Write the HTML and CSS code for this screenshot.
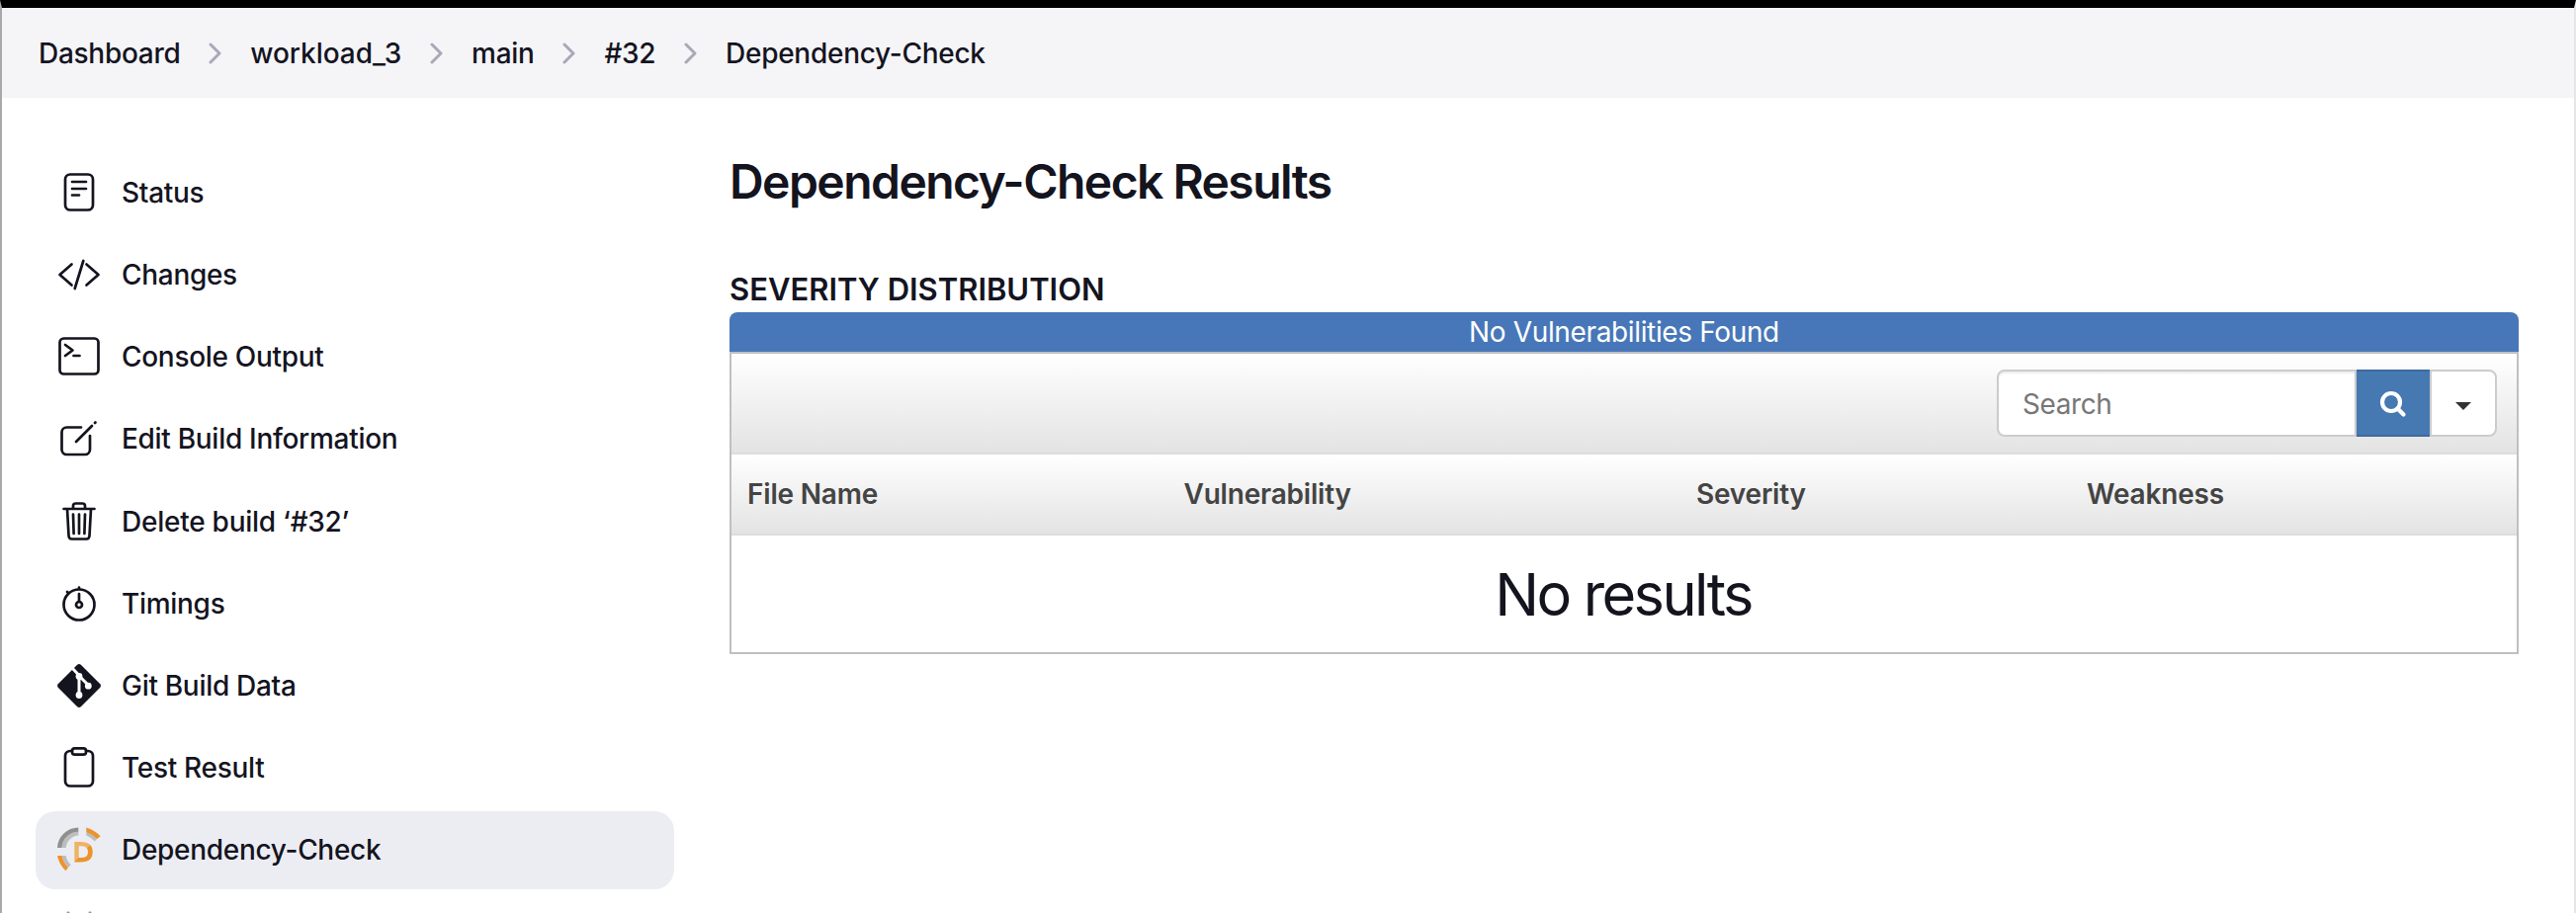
FILE: index.html
```html
<!DOCTYPE html>
<html lang="en">
<head>
<meta charset="utf-8">
<title>Dependency-Check Results</title>
<link rel="stylesheet" href="styles.css">
</head>
<body>
<div class="window">
<nav class="crumbs">
  <span class="crumb">Dashboard</span>
  <svg class="chev" viewBox="0 0 14 22"><path d="M2 2l9 9-9 9"/></svg>
  <span class="crumb wide">workload_3</span>
  <svg class="chev" viewBox="0 0 14 22"><path d="M2 2l9 9-9 9"/></svg>
  <span class="crumb">main</span>
  <svg class="chev" viewBox="0 0 14 22"><path d="M2 2l9 9-9 9"/></svg>
  <span class="crumb">#32</span>
  <svg class="chev" viewBox="0 0 14 22"><path d="M2 2l9 9-9 9"/></svg>
  <span class="crumb">Dependency-Check</span>
</nav>
<div class="page">
  <aside class="tasks">
    <a class="task"><svg class="icon" viewBox="0 0 48 48"><rect x="10" y="5.500" width="28" height="36" rx="5"/><path d="M17 13h14M17 20h14M17 26.500h7"/></svg><span>Status</span></a>
    <a class="task"><svg class="icon" viewBox="0 0 48 48"><path d="M16.500 13.500L4.500 24l12 10.500M31.500 13.500L43.500 24l-12 10.500M28.300 10L19.700 38"/></svg><span>Changes</span></a>
    <a class="task"><svg class="icon" viewBox="0 0 48 48"><rect x="4.500" y="5.500" width="39" height="36" rx="4"/><path d="M10 12l7.500 5.500L10 23M18.500 23h6"/></svg><span>Console Output</span></a>
    <a class="task"><svg class="icon" viewBox="0 0 48 48"><path d="M26 12.500H11.500a5 5 0 0 0-5 5V35a5 5 0 0 0 5 5H30a5 5 0 0 0 5-5V21M21 27L37 11M40 8l.5-.5"/></svg><span>Edit Build Information</span></a>
    <a class="task"><svg class="icon" viewBox="0 0 48 48"><path d="M12 12l1.500 27q.2 3.500 3 3.500h15q2.800 0 3-3.500L36 12M8.500 12h31M18 11.500V9Q18 6.500 20.500 6.500h7Q30 6.500 30 9v2.500M18 17.500l.6 19.500M24 17.500v19.500M30 17.500l-.6 19.500"/></svg><span class="drop-line">Delete build ‘#32’</span></a>
    <a class="task"><svg class="icon" viewBox="0 0 48 48"><circle cx="24" cy="25" r="15.500"/><circle cx="24" cy="25" r="3"/><path d="M24 22v-8M24 9V7.500M13 13l-1-1"/></svg><span>Timings</span></a>
    <a class="task"><svg class="icon git" viewBox="0 0 48 48"><path class="fill" d="M22.200 2.700q1.800-1.500 3.600 0l19.500 19.500q1.500 1.800 0 3.600L25.800 45.300q-1.800 1.500-3.600 0L2.700 25.800q-1.500-1.800 0-3.600z"/><path class="cut" d="M17 6l7 7.500v19.500M24 14l9.500 9.500"/><circle class="dot" cx="24" cy="14.500" r="3.400"/><circle class="dot" cx="24" cy="33.500" r="3.400"/><circle class="dot" cx="33.300" cy="24.200" r="3.400"/></svg><span>Git Build Data</span></a>
    <a class="task"><svg class="icon" viewBox="0 0 48 48"><path d="M17 7h-2a5 5 0 0 0-5 5v25.500a5 5 0 0 0 5 5h18a5 5 0 0 0 5-5V12a5 5 0 0 0-5-5h-2"/><rect x="17" y="4.300" width="14" height="6.400" rx="2.500"/></svg><span>Test Result</span></a>
    <a class="task active"><svg class="icon odc" viewBox="0 0 48 48">
      <defs><linearGradient id="dee" x1="0" y1="0" x2="1" y2="1"><stop offset=".5" stop-color="#efb365"/><stop offset=".5" stop-color="#ec932d"/></linearGradient></defs>
      <path fill="#bdbdbd" d="M6.500 22A17.500 17.500 0 0 1 23.300 5.500v4A13.500 13.500 0 0 0 10.700 22z"/>
      <path fill="#8f8f8f" d="M2 22A21.500 21.500 0 0 1 23.300 1.400v4.400A17 17 0 0 0 6.500 22z"/>
      <path fill="#bdbdbd" d="M31.300 5.500q6.500 2.200 11 7.200L39.700 15.500q-3.500-4-8.400-6z"/>
      <path fill="#ec932d" d="M31.300 1.400q8.500 2.400 14.400 8.800l-3.400 2.900q-4.500-4.800-11-7.100z"/>
      <path fill="#bdbdbd" d="M6.500 30h4.200q1 5.500 5 9.300L13 42q-5-5-6.500-12z"/>
      <path fill="#ec932d" d="M2 30h4.500q1.500 7 6.500 12l-2.600 3.200Q3.800 39 2 30z"/>
      <path fill="url(#dee)" fill-rule="evenodd" d="M19.300 16H26q11.700 0 11.700 10.200T26 36.400h-6.700zM23.700 20.300v11.800H26q7 0 7-5.900t-7-5.900z"/>
    </svg><span>Dependency-Check</span></a>
    <a class="task"><svg class="icon next" viewBox="0 0 48 48"><path d="M12.500 4.500h1M34.500 4.500h1"/></svg></a>
  </aside>
  <main class="content">
    <h1>Dependency-Check Results</h1>
    <h2>SEVERITY DISTRIBUTION</h2>
    <div class="banner"><span>No Vulnerabilities Found</span></div>
    <section class="grid">
      <div class="toolbar">
        <div class="search"><span>Search</span></div>
        <div class="go"><svg viewBox="0 0 28 28"><circle cx="12" cy="12" r="9"/><path d="M18.500 18.500l6 6"/></svg></div>
        <div class="drop"><svg viewBox="0 0 16 8"><path d="M0 0h16L8 8z"/></svg></div>
      </div>
      <div class="heads"><span>File Name</span><span>Vulnerability</span><span>Severity</span><span>Weakness</span></div>
      <div class="empty"><span>No results</span></div>
    </section>
  </main>
</div>
</div>
</body>
</html>
```
FILE: styles.css
```css
* { box-sizing: border-box; }
body { margin: 0; font-family: Inter, "Liberation Sans", sans-serif; font-size: 28px; color: #14141f; background: #fff; }
.window { height: 924px; overflow: hidden; border-top: 8px solid #000; border-left: 2px solid #a9a9ab; border-right: 2px solid #e6e6e6; }
.crumbs { display: flex; align-items: center; height: 91px; padding-left: 37px; background: #f5f5f8; font-weight: 500; letter-spacing: -0.28px; white-space: nowrap; }
.wide { letter-spacing: -0.05px; }
.chev { width: 14px; height: 22px; margin: 0 28px 0 28.8px; fill: none; stroke: #a9a8b8; stroke-width: 3; stroke-linecap: round; stroke-linejoin: round; }
.page { display: flex; }
.tasks { display: flex; flex-direction: column; gap: 4px; width: 680px; padding: 56px 0 0 34px; flex: none; }
.task { display: flex; align-items: center; flex: none; height: 79.2px; padding-left: 20px; gap: 19px; font-weight: 450; letter-spacing: -0.3px; border-radius: 20px; white-space: nowrap; }
.drop-line { padding-top: 1px; letter-spacing: -0.25px; }
.active { background: #ecedf3; font-weight: 500; }
.icon { width: 48px; height: 48px; flex: none; fill: none; stroke: #14141f; stroke-width: 2.7; stroke-linecap: round; stroke-linejoin: round; }
.git .fill { fill: #14141f; stroke: none; }
.git .cut { stroke: #fff; stroke-width: 3; }
.git .dot { fill: #fff; stroke: none; }
.odc { stroke: none; }
.next { stroke: #999; stroke-width: 2; }
.content { flex: none; width: 1810px; margin-left: 56px; padding-top: 53px; }
h1 { margin: 0; font-size: 48px; line-height: 64px; font-weight: 640; letter-spacing: -1.55px; white-space: nowrap; }
h2 { margin: 56px 0 2px; font-size: 31px; line-height: 42px; font-weight: 600; letter-spacing: -0.02px; white-space: nowrap; }
.banner { display: flex; align-items: center; justify-content: center; height: 40px; background: #4777b8; border-radius: 8px 8px 0 0; color: #fff; font-weight: 420; letter-spacing: -0.36px; }
.grid { border: 2px solid #c0c0c0; }
.toolbar { display: flex; justify-content: flex-end; height: 102px; padding: 16px 20px 0 0; border-bottom: 2px solid #ddd; background: linear-gradient(#fff, #e3e3e3); }
.search { display: flex; align-items: center; width: 364px; height: 68px; padding: 2px 0 0 24px; border: 2px solid #ccc; border-radius: 8px 0 0 8px; background: #fff; box-shadow: inset 0 2px 2px rgba(0,0,0,.075); color: #777; letter-spacing: -0.4px; }
.go { display: flex; align-items: center; justify-content: center; width: 74px; height: 68px; background: #4678b2; border-top: 2px solid #3e6a9f; border-bottom: 2px solid #3e6a9f; }
.go svg { width: 28px; height: 28px; margin-top: 2px; fill: none; stroke: #fff; stroke-width: 4.200; stroke-linecap: round; }
.drop { display: flex; align-items: center; justify-content: center; width: 68px; height: 68px; background: #fff; border: 2px solid #ccc; border-radius: 0 8px 8px 0; }
.drop svg { width: 16px; height: 8px; margin-top: 6px; fill: #333; }
.heads { display: grid; grid-template-columns: 441.5px 518.5px 395px 1fr; align-items: center; height: 82px; padding-left: 16px; border-bottom: 2px solid #ddd; background: linear-gradient(#fff, #e3e3e3); color: #444; font-weight: 600; letter-spacing: -0.2px; }
.empty { display: flex; align-items: center; justify-content: center; height: 118px; padding-right: 2px; font-size: 59.5px; font-weight: 430; letter-spacing: -2.6px; }
```
